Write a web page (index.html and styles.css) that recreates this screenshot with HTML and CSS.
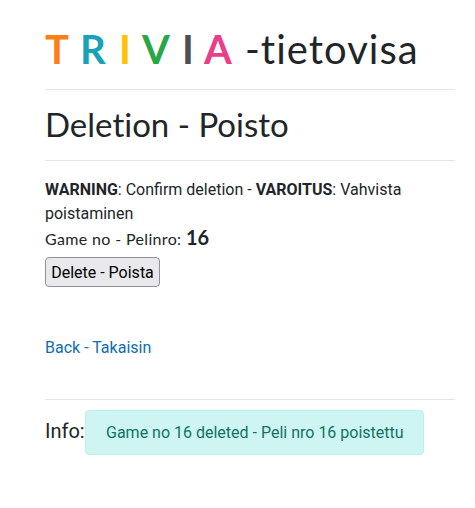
FILE: index.html
```
<!DOCTYPE html>
<html lang="fi">
<head>
<meta charset="utf-8">
<title>TRIVIA-tietovisa</title>
<link rel="stylesheet" href="styles.css">
</head>
<body>
<main class="container">
<h1 class="brand"><span class="letter orange">T</span><span class="letter cyan">R</span><span class="letter yellow">I</span><span class="letter green">V</span><span class="letter gray">I</span><span class="letter pink">A</span><span class="suffix">-tietovisa</span></h1>
<hr>
<h2 class="title">Deletion - Poisto</h2>
<hr>
<p class="warning"><b>WARNING</b>: Confirm deletion - <b>VAROITUS</b>: Vahvista poistaminen</p>
<div class="game"><span class="label">Game no - Pelinro:</span><b class="number">16</b></div>
<button class="delete" type="button">Delete - Poista</button>
<a class="back" href="#">Back - Takaisin</a>
<hr>
<div class="info"><span class="info-label">Info:</span><div class="alert">Game no 16 deleted - Peli nro 16 poistettu</div></div>
</main>
</body>
</html>
```
FILE: styles.css
```
* { box-sizing: border-box; }
body { margin: 0; background: #fff; color: #212529; font: 16px/24px Roboto, sans-serif; }
.container { margin-left: 45px; width: 410px; padding-top: 25px; }
hr { height: 1px; margin: 0; border: 0; background: #e5e5e5; }
.brand { display: grid; grid-template-columns: 35px 39px 23px 40px 22px 41px auto; height: 64px; margin: 0; font: 400 40px/48px Lato, sans-serif; white-space: nowrap; }
.letter { font-weight: 700; }
.orange { color: #fd7e14; }
.cyan { color: #17a2b8; }
.yellow { color: #ffc107; }
.green { color: #28a745; }
.gray { color: #4c4e56; }
.pink { color: #e83e8c; }
.suffix { letter-spacing: 1px; }
.title { height: 70px; margin: 0; padding-top: 15px; font: 400 33px/38px Lato, sans-serif; font-variant-ligatures: none; }
.warning { margin: 17px 0 0; }
.game { display: flex; align-items: baseline; height: 31px; font-family: Lato, sans-serif; line-height: 23px; }
.label { width: 141px; letter-spacing: .35px; }
.number { font-size: 20px; }
.delete { display: block; width: 115px; height: 30px; margin: 0; padding: 1px 0 0; border: 1px solid #8f8f9d; border-radius: 4px; background: #e9e9ed; color: #000; font: 16px/24px Roboto, sans-serif; }
.back { display: block; width: max-content; margin: 49px 0 39px; color: #0e6eb0; text-decoration: none; }
.info { display: flex; padding-top: 10px; }
.info-label { width: 40px; font-size: 20px; line-height: 42px; }
.alert { width: 339px; height: 45px; padding: 10px 20px; border: 1px solid #b8f2ea; border-radius: 4px; background: #cff5f2; color: #0f7264; white-space: nowrap; }
```
